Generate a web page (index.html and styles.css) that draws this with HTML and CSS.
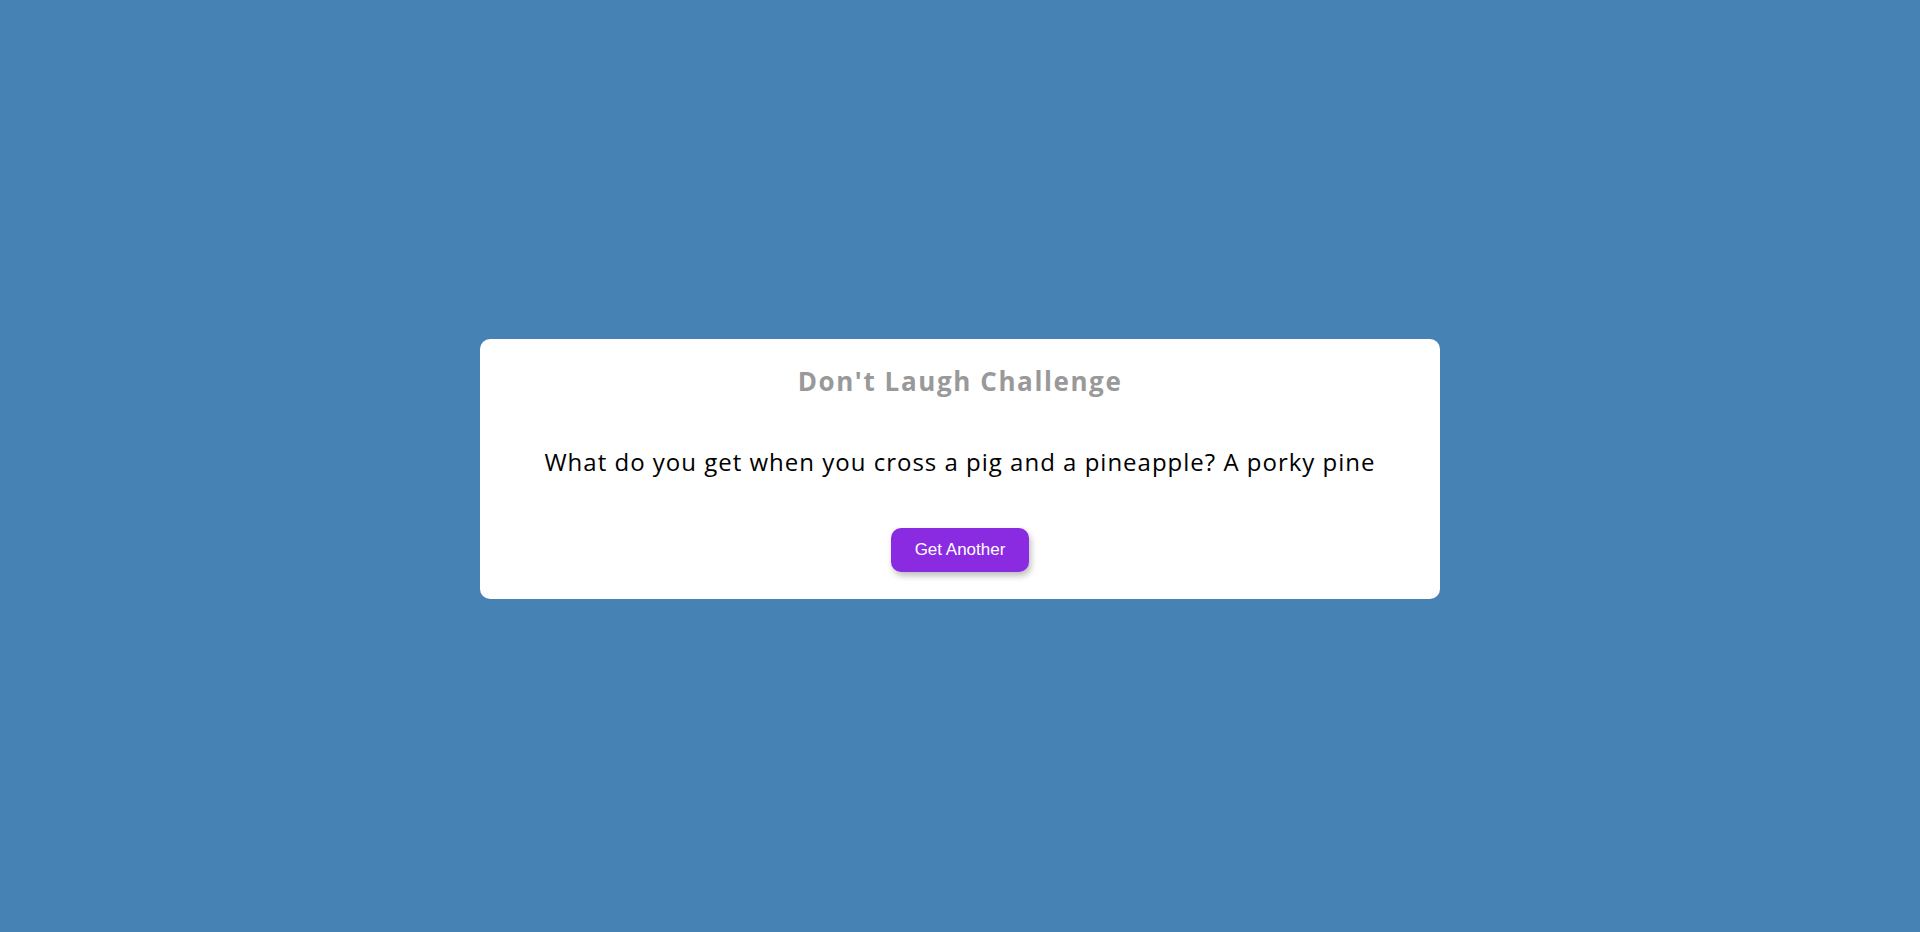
FILE: index.html
```html
<!DOCTYPE html>
<html lang="en">
<head>
<meta charset="UTF-8">
<title>Don't Laugh Challenge</title>
<link rel="stylesheet" href="styles.css">
</head>
<body>
  <div class="container">
    <h3 class="title">Don't Laugh Challenge</h3>
    <div class="joke">What do you get when you cross a pig and a pineapple? A porky pine</div>
    <button class="btn">Get Another</button>
  </div>
</body>
</html>
```
FILE: styles.css
```css
* { box-sizing: border-box; }
html, body { margin: 0; padding: 0; }
body {
  background: #4682b4;
  height: 100vh;
  padding-top: 6px;
  display: flex;
  align-items: center;
  justify-content: center;
  font-family: "Open Sans", "Noto Sans", sans-serif;
}
.container {
  width: 960px;
  background: #fff;
  border-radius: 10px;
  padding: 24px 20px 27px;
  text-align: center;
  display: flex;
  flex-direction: column;
  align-items: center;
}
.title {
  margin: 0;
  color: #999;
  font-size: 26px;
  font-weight: 700;
  letter-spacing: 1.6px;
}
.joke {
  margin: 46px 0 50px;
  font-size: 24px;
  letter-spacing: 1px;
  color: #000;
}
.btn {
  width: 138px;
  height: 44px;
  border: none;
  border-radius: 10px;
  background: #8a2be2;
  color: #fff;
  font-family: "Liberation Sans", Arial, sans-serif;
  font-size: 17px;
  box-shadow: 2px 4px 6px rgba(0,0,0,0.25);
}
```
